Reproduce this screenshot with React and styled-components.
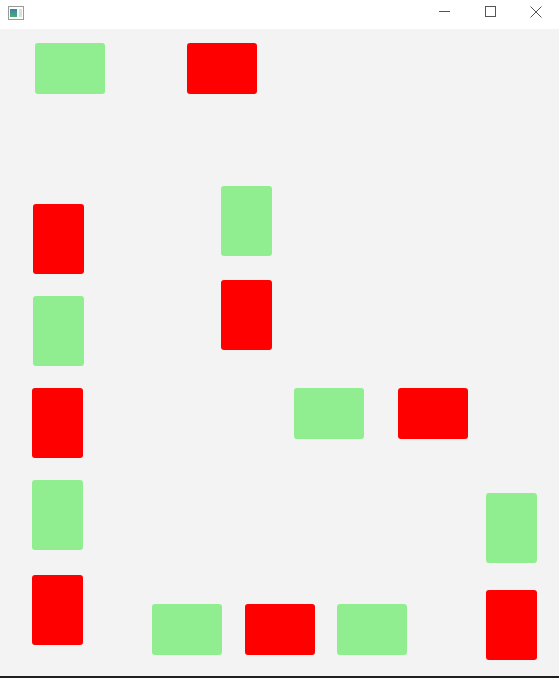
import React from 'react';
import styled, { createGlobalStyle } from 'styled-components';

const GlobalStyle = createGlobalStyle`
  html, body { margin: 0; padding: 0; }
  body { font-family: "Segoe UI", "Noto Sans", sans-serif; background: #f3f3f3; }
`;

const blocks = [
  { x: 35, y: 43, w: 70, h: 51, c: 'green' },
  { x: 187, y: 43, w: 70, h: 51, c: 'red' },
  { x: 33, y: 204, w: 51, h: 70, c: 'red' },
  { x: 221, y: 186, w: 51, h: 70, c: 'green' },
  { x: 33, y: 296, w: 51, h: 70, c: 'green' },
  { x: 221, y: 280, w: 51, h: 70, c: 'red' },
  { x: 32, y: 388, w: 51, h: 70, c: 'red' },
  { x: 294, y: 388, w: 70, h: 51, c: 'green' },
  { x: 398, y: 388, w: 70, h: 51, c: 'red' },
  { x: 32, y: 480, w: 51, h: 70, c: 'green' },
  { x: 486, y: 493, w: 51, h: 70, c: 'green' },
  { x: 32, y: 575, w: 51, h: 70, c: 'red' },
  { x: 486, y: 590, w: 51, h: 70, c: 'red' },
  { x: 152, y: 604, w: 70, h: 51, c: 'green' },
  { x: 245, y: 604, w: 70, h: 51, c: 'red' },
  { x: 337, y: 604, w: 70, h: 51, c: 'green' },
];

export default function App() {
  return (
    <Window>
      <GlobalStyle />
      <TitleBar>
        <AppIcon width="16" height="14" viewBox="0 0 16 14">
          <rect x="0.5" y="0.5" width="15" height="13" fill="#fff" stroke="#9a9a9a" />
          <defs>
            <linearGradient id="g" x1="0" y1="0" x2="0" y2="1">
              <stop offset="0" stopColor="#3a7fb0" />
              <stop offset="1" stopColor="#4cae6a" />
            </linearGradient>
          </defs>
          <rect x="2" y="3" width="7" height="8" fill="url(#g)" />
          <rect x="11" y="3" width="3" height="8" fill="#cfe6d6" />
        </AppIcon>
        <Controls>
          <CtrlButton>
            <svg width="11" height="11" viewBox="0 0 11 11">
              <line x1="0" y1="5.5" x2="11" y2="5.5" stroke="#555" strokeWidth="1" />
            </svg>
          </CtrlButton>
          <CtrlButton>
            <svg width="11" height="11" viewBox="0 0 11 11">
              <rect x="0.5" y="0.5" width="10" height="10" fill="none" stroke="#555" strokeWidth="1" />
            </svg>
          </CtrlButton>
          <CtrlButton>
            <svg width="12" height="12" viewBox="0 0 12 12">
              <path d="M0.5 0.5 L11.5 11.5 M11.5 0.5 L0.5 11.5" stroke="#555" strokeWidth="1" />
            </svg>
          </CtrlButton>
        </Controls>
      </TitleBar>
      <Canvas>
        {blocks.map((b, i) => (
          <Block
            key={i}
            $color={b.c}
            style={{ left: b.x, top: b.y - 29, width: b.w, height: b.h }}
          />
        ))}
      </Canvas>
      <BottomEdge />
    </Window>
  );
}

const Window = styled.div`
  width: 559px;
  height: 678px;
  display: flex;
  flex-direction: column;
  background: #f3f3f3;
  overflow: hidden;
`;

const TitleBar = styled.div`
  height: 29px;
  flex: none;
  background: #ffffff;
  display: flex;
  align-items: center;
  justify-content: space-between;
  padding-left: 8px;
  box-sizing: border-box;
`;

const AppIcon = styled.svg`
  display: block;
  margin-top: -4px;
`;

const Controls = styled.div`
  display: flex;
  height: 100%;
`;

const CtrlButton = styled.div`
  width: 46px;
  height: 100%;
  display: flex;
  align-items: center;
  justify-content: center;
  margin-top: -3px;
`;

const Canvas = styled.div`
  position: relative;
  flex: 1;
  background: #f3f3f3;
`;

const Block = styled.div`
  position: absolute;
  border-radius: 3px;
  background: ${p => (p.$color === 'red' ? '#ff0000' : '#90ee90')};
`;

const BottomEdge = styled.div`
  height: 2px;
  flex: none;
  background: #1f1f1f;
`;
